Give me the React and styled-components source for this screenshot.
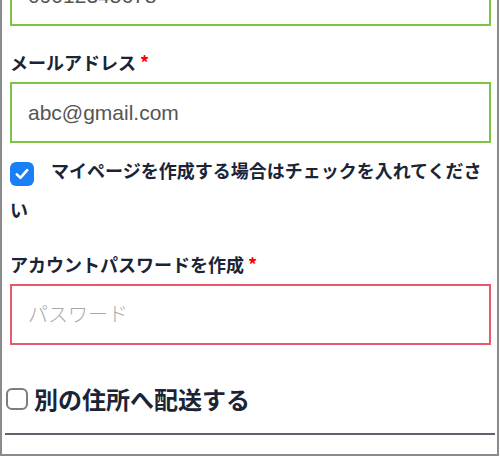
import React from "react";
import styled, { createGlobalStyle } from "styled-components";

const GlobalStyle = createGlobalStyle`
  html, body {
    margin: 0;
    padding: 0;
    background: #ffffff;
  }
  body {
    font-family: "Noto Sans CJK JP", "Noto Sans", sans-serif;
  }
`;

function App() {
  return (
    <>
      <GlobalStyle />
      <Frame>
        <Form>
          <TextInput type="tel" defaultValue="09012345678" $state="ok" $first />

          <Label>
            メールアドレス <Required>*</Required>
          </Label>
          <TextInput type="email" defaultValue="abc@gmail.com" $state="ok" />

          <CheckLine>
            <CheckBox $checked>
              <svg width="16" height="16" viewBox="0 0 16 16">
                <path
                  d="M2.8 8.4 L6.4 11.9 L13.2 4.2"
                  fill="none"
                  stroke="#ffffff"
                  strokeWidth="2.6"
                  strokeLinecap="round"
                  strokeLinejoin="round"
                />
              </svg>
            </CheckBox>
            マイページを作成する場合はチェックを入れてください
          </CheckLine>

          <Label $spaced>
            アカウントパスワードを作成 <Required>*</Required>
          </Label>
          <TextInput type="password" placeholder="パスワード" $state="error" />
        </Form>

        <Shipping>
          <ShipRow>
            <CheckBox />
            <ShipText>別の住所へ配送する</ShipText>
          </ShipRow>
          <Divider />
        </Shipping>
      </Frame>
    </>
  );
}

export default App;

const Frame = styled.div`
  width: 499px;
  height: 456px;
  box-sizing: border-box;
  border: 2px solid #8b8b8b;
  border-top: none;
  overflow: hidden;
  color: #1b2435;
`;

const Form = styled.div`
  display: flex;
  flex-direction: column;
  padding: 0 6px 0 8px;
`;

const TextInput = styled.input`
  display: block;
  box-sizing: border-box;
  width: 100%;
  height: 61px;
  margin: ${(props) => (props.$first ? "-35px 0 0" : "0")};
  padding: 0 16px;
  border: 2px solid
    ${(props) => (props.$state === "error" ? "#e8596b" : "#7cc444")};
  border-radius: 0;
  outline: none;
  background: #ffffff;
  font-family: "Liberation Sans", "Noto Sans CJK JP", sans-serif;
  font-size: 21px;
  color: #555555;

  &::placeholder {
    font-family: "Noto Sans CJK JP", sans-serif;
    font-weight: 300;
    font-size: 20px;
    color: #a9a9a9;
  }
`;

const Label = styled.div`
  margin: ${(props) => (props.$spaced ? "22px 0 7px" : "23px 0 7px")};
  font-size: 18px;
  line-height: 26px;
  font-weight: 700;
  color: #1b2435;
`;

const Required = styled.span`
  color: #ff0000;
`;

const CheckLine = styled.div`
  margin-top: 8px;
  font-size: 18px;
  line-height: 39px;
  font-weight: 700;
  color: #1b2435;
`;

const CheckBox = styled.span`
  display: inline-flex;
  align-items: center;
  justify-content: center;
  box-sizing: border-box;
  flex: none;
  width: ${(props) => (props.$checked ? "24px" : "22px")};
  height: ${(props) => (props.$checked ? "24px" : "22px")};
  margin-right: ${(props) => (props.$checked ? "17px" : "0")};
  vertical-align: -4px;
  border-radius: 6px;
  background: ${(props) => (props.$checked ? "#1a7ef6" : "#ffffff")};
  border: ${(props) => (props.$checked ? "none" : "2px solid #7b7d82")};
`;

const Shipping = styled.div`
  padding: 0 2px 0 3px;
`;

const ShipRow = styled.div`
  display: flex;
  align-items: center;
  gap: 6px;
  margin: 37px 0 0 1px;
  height: 34px;
`;

const ShipText = styled.span`
  font-size: 24px;
  font-weight: 700;
  line-height: 34px;
  color: #1b2435;
`;

const Divider = styled.div`
  height: 2px;
  margin-top: 17px;
  background: #5f646c;
`;
